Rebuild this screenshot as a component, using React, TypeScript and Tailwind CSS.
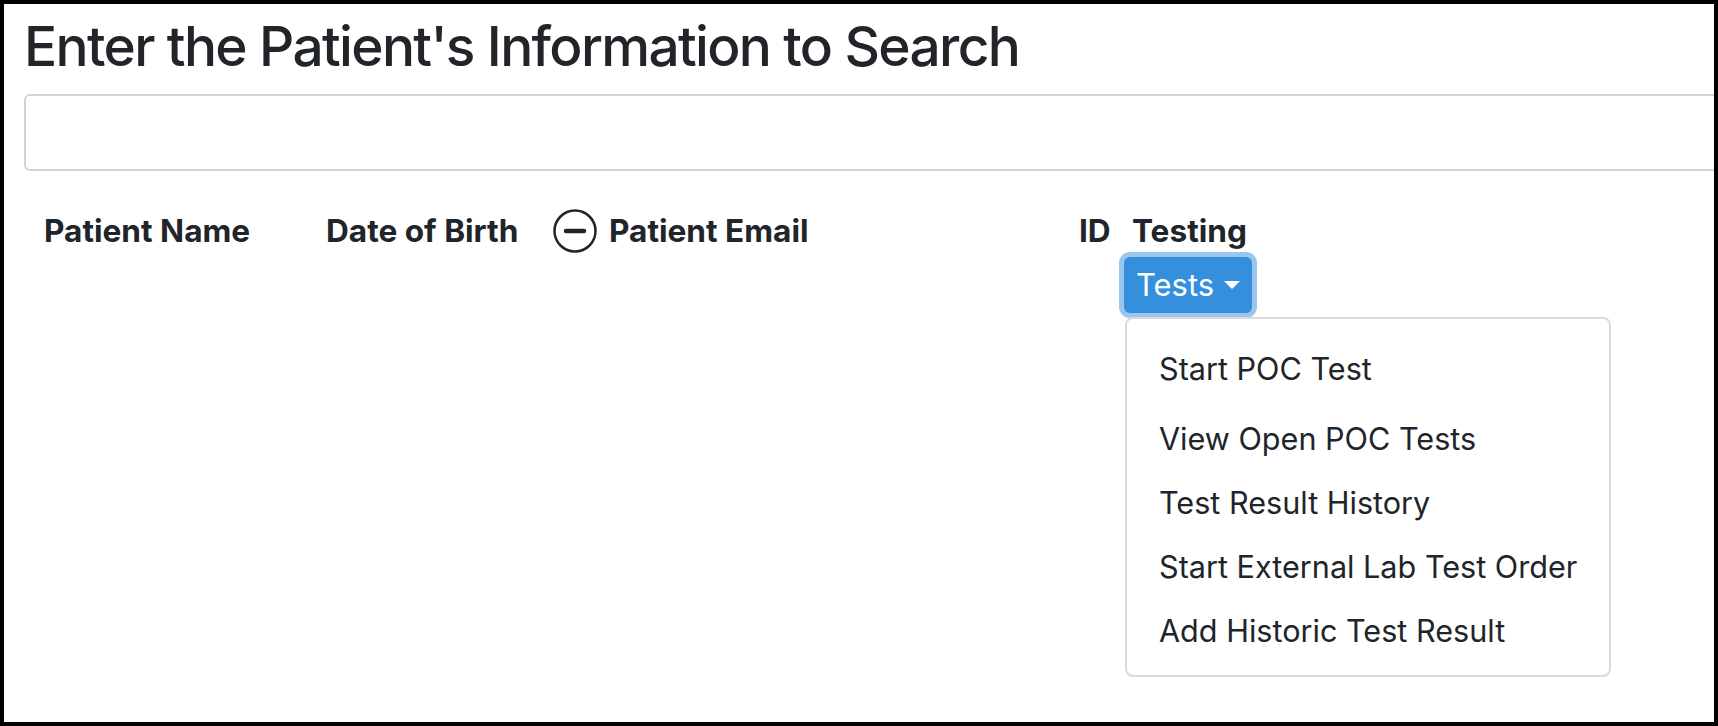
import React from "react";

const menuItems = [
    "Start POC Test",
    "View Open POC Tests",
    "Test Result History",
    "Start External Lab Test Order",
    "Add Historic Test Result",
];

function MinusCircle() {
    return (
        <svg width="44" height="44" viewBox="0 0 44 44" fill="none">
            <circle cx="22" cy="22" r="20.5" stroke="#212529" strokeWidth="2.5" />
            <line x1="13" y1="22" x2="31" y2="22" stroke="#212529" strokeWidth="4.5" strokeLinecap="round" />
        </svg>
    );
}

export default function App() {
    return (
        <div className="w-[1718px] h-[726px] border-4 border-black bg-white overflow-hidden font-['Inter',sans-serif] text-[#212529]">
            <div className="pl-5 pt-[9px]">
                {/* Title + search */}
                <h1 className="text-[55px] leading-[1.2] font-medium tracking-[-0.03em]">Enter the Patient's Information to Search</h1>
                <input
                    type="text"
                    className="mt-[15px] w-[1720px] h-[77px] border-2 border-[#ced4da] rounded-md outline-none px-4 text-2xl"
                />

                {/* Table header */}
                <div className="grid grid-cols-[282px_227px_526px_53px_1fr] pl-5 mt-[38px]">
                    <div className="h-11 flex items-center text-[31.6px] font-bold">Patient Name</div>
                    <div className="h-11 flex items-center text-[31.6px] font-bold">Date of Birth</div>
                    <div className="h-11 flex items-center gap-3 text-[31.6px] font-bold">
                        <MinusCircle />
                        <span>Patient Email</span>
                    </div>
                    <div className="h-11 flex items-center text-[31.6px] font-bold">ID</div>
                    <div className="h-11 flex items-center text-[31.6px] font-bold">Testing</div>

                    <div className="col-start-5 flex flex-col items-start pt-1">
                        <button className="-ml-[8px] w-[128px] h-[56px] bg-[#3490dc] rounded-md text-white text-[31px] flex items-center justify-center gap-[10px] shadow-[0_0_0_5px_rgba(52,144,220,0.5)]">
                            <span>Tests</span>
                            <span className="w-0 h-0 border-t-[8px] border-t-white border-x-[8px] border-x-transparent" />
                        </button>
                        <div className="-ml-[7px] mt-[4px] w-[486px] border-2 border-[#dadada] rounded-lg bg-white pt-[18px] pb-[12px]">
                            {menuItems.map((item, i) => (
                                <div key={item} className={"h-16 flex items-center pl-8 text-[30.6px] " + (i === 0 ? "mb-[6px]" : "")}>
                                    {item}
                                </div>
                            ))}
                        </div>
                    </div>
                </div>
            </div>
        </div>
    );
}
